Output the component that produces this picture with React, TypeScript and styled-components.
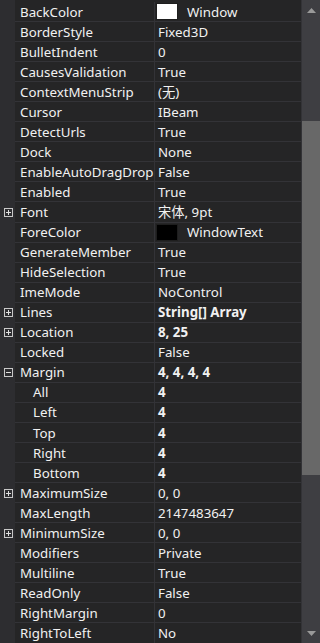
import styled, { createGlobalStyle } from "styled-components";

type Prop = {
  name: string;
  value: string;
  bold?: boolean;
  expander?: "plus" | "minus";
  child?: boolean;
  swatch?: string;
};

const props: Prop[] = [
  { name: "BackColor", value: "Window", swatch: "#ffffff" },
  { name: "BorderStyle", value: "Fixed3D" },
  { name: "BulletIndent", value: "0" },
  { name: "CausesValidation", value: "True" },
  { name: "ContextMenuStrip", value: "(无)" },
  { name: "Cursor", value: "IBeam" },
  { name: "DetectUrls", value: "True" },
  { name: "Dock", value: "None" },
  { name: "EnableAutoDragDrop", value: "False" },
  { name: "Enabled", value: "True" },
  { name: "Font", value: "宋体, 9pt", expander: "plus" },
  { name: "ForeColor", value: "WindowText", swatch: "#000000" },
  { name: "GenerateMember", value: "True" },
  { name: "HideSelection", value: "True" },
  { name: "ImeMode", value: "NoControl" },
  { name: "Lines", value: "String[] Array", bold: true, expander: "plus" },
  { name: "Location", value: "8, 25", bold: true, expander: "plus" },
  { name: "Locked", value: "False" },
  { name: "Margin", value: "4, 4, 4, 4", bold: true, expander: "minus" },
  { name: "All", value: "4", bold: true, child: true },
  { name: "Left", value: "4", bold: true, child: true },
  { name: "Top", value: "4", bold: true, child: true },
  { name: "Right", value: "4", bold: true, child: true },
  { name: "Bottom", value: "4", bold: true, child: true },
  { name: "MaximumSize", value: "0, 0", expander: "plus" },
  { name: "MaxLength", value: "2147483647" },
  { name: "MinimumSize", value: "0, 0", expander: "plus" },
  { name: "Modifiers", value: "Private" },
  { name: "Multiline", value: "True" },
  { name: "ReadOnly", value: "False" },
  { name: "RightMargin", value: "0" },
  { name: "RightToLeft", value: "No" },
];

const GlobalStyle = createGlobalStyle`
  html, body {
    margin: 0;
    padding: 0;
    background: #252526;
  }
  * {
    box-sizing: border-box;
  }
`;

function App() {
  return (
    <>
      <GlobalStyle />
      <GridStyle>
        <ListStyle>
          {props.map((p) => (
            <RowStyle key={p.name}>
              <MarginCell>
                {p.expander && (
                  <ExpanderBox>
                    <svg width="9" height="9" viewBox="0 0 9 9">
                      <rect x="0.5" y="0.5" width="8" height="8" fill="none" stroke="#c8c8c8" />
                      <line x1="2" y1="4.5" x2="7" y2="4.5" stroke="#e0e0e0" />
                      {p.expander === "plus" && (
                        <line x1="4.5" y1="2" x2="4.5" y2="7" stroke="#e0e0e0" />
                      )}
                    </svg>
                  </ExpanderBox>
                )}
              </MarginCell>
              <NameCell $child={p.child}>{p.name}</NameCell>
              <ValueCell $bold={p.bold}>
                {p.swatch && <Swatch $color={p.swatch} />}
                {p.value}
              </ValueCell>
            </RowStyle>
          ))}
        </ListStyle>
        <ScrollBar>
          <Arrow>
            <svg width="9" height="5" viewBox="0 0 9 5">
              <polygon points="0,5 9,5 4.5,0" fill="#999999" />
            </svg>
          </Arrow>
          <Track>
            <Thumb />
          </Track>
          <Arrow>
            <svg width="9" height="5" viewBox="0 0 9 5">
              <polygon points="0,0 9,0 4.5,5" fill="#999999" />
            </svg>
          </Arrow>
        </ScrollBar>
      </GridStyle>
    </>
  );
}

const GridStyle = styled.div`
  width: 320px;
  height: 643px;
  display: flex;
  overflow: hidden;
  background: #252526;
  font-family: "Noto Sans", "Noto Sans CJK SC", sans-serif;
  font-size: 13.3px;
  color: #f1f1f1;
`;

const ListStyle = styled.div`
  flex: 1;
  display: flex;
  flex-direction: column;
  padding-top: 2px;
  background: linear-gradient(to right, #2d2d30 15px, #252526 15px);
`;

const RowStyle = styled.div`
  display: grid;
  grid-template-columns: 15px 139px 1fr;
  height: 20.05px;
  flex-shrink: 0;
`;

const MarginCell = styled.div`
  display: flex;
  align-items: center;
  justify-content: center;
  padding-left: 1px;
`;

const ExpanderBox = styled.span`
  display: flex;
  width: 9px;
  height: 9px;
`;

const NameCell = styled.div<{ $child?: boolean }>`
  display: flex;
  align-items: center;
  padding-left: ${(p) => (p.$child ? "18px" : "5px")};
  border-bottom: 1px solid #333337;
  white-space: nowrap;
  overflow: hidden;
`;

const ValueCell = styled.div<{ $bold?: boolean }>`
  display: flex;
  align-items: center;
  gap: 9px;
  padding-left: 3px;
  border-left: 1px solid #333337;
  border-bottom: 1px solid #333337;
  font-weight: ${(p) => (p.$bold ? 700 : 400)};
  white-space: nowrap;
  overflow: hidden;
`;

const Swatch = styled.span<{ $color: string }>`
  width: 22px;
  height: 17px;
  margin-left: -2px;
  background: ${(p) => p.$color};
  border: 1px solid #1e1e1e;
  flex-shrink: 0;
`;

const ScrollBar = styled.div`
  width: 19px;
  display: flex;
  flex-direction: column;
  background: #3e3e42;
  border-left: 1px solid #333337;
`;

const Arrow = styled.div`
  height: 20px;
  display: flex;
  align-items: center;
  justify-content: center;
`;

const Track = styled.div`
  flex: 1;
  padding-top: 101px;
  padding-bottom: 148px;
  display: flex;
  justify-content: center;
`;

const Thumb = styled.div`
  width: 10px;
  flex: 1;
  background: #686868;
`;

export default App;
